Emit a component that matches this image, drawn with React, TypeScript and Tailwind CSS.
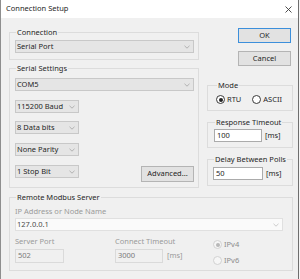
import React from "react";

const font = { fontFamily: "'Noto Sans', 'Liberation Sans', sans-serif" };

function Chevron({ color = "#a3a3a3" }: { color?: string }) {
  return (
    <svg width="6" height="4" viewBox="0 0 6 4" className="shrink-0">
      <polyline points="0.5,0.8 3,3.2 5.5,0.8" fill="none" stroke={color} strokeWidth="0.8" />
    </svg>
  );
}

function Combo({ value, className = "" }: { value: string; className?: string }) {
  return (
    <div
      className={`flex h-[13px] items-center justify-between border border-[#c8c8c8] bg-[#e5e5e5] pl-[1px] pr-[3px] text-[#262626] ${className}`}
    >
      <span className="leading-none">{value}</span>
      <Chevron />
    </div>
  );
}

function Group({
  title,
  className = "",
  children,
}: {
  title: string;
  className?: string;
  children: React.ReactNode;
}) {
  return (
    <fieldset className={`border border-[#dcdcdc] ${className}`}>
      <legend className="ml-[1px] px-[1px] leading-[10px] text-[#262626]">{title}</legend>
      {children}
    </fieldset>
  );
}

function Radio({ label, checked, disabled }: { label: string; checked?: boolean; disabled?: boolean }) {
  return (
    <div className="flex items-center gap-[2px]">
      <div
        className={`flex h-[9px] w-[9px] items-center justify-center rounded-full border ${
          disabled ? "border-[#d2d2d2] bg-[#f6f6f6]" : "border-[#3a3a3a] bg-white"
        }`}
      >
        {checked && (
          <div className={`h-[4px] w-[4px] rounded-full ${disabled ? "bg-[#b8b8b8]" : "bg-[#222222]"}`} />
        )}
      </div>
      <span className={`leading-none ${disabled ? "text-[#8d8d8d]" : "text-[#262626]"}`}>{label}</span>
    </div>
  );
}

function Button({ label, primary, className = "" }: { label: string; primary?: boolean; className?: string }) {
  return (
    <div
      className={`flex items-center justify-center border bg-[#e2e2e2] leading-none text-[#262626] ${
        primary ? "border-[#3c8fdb]" : "border-[#b4b4b4]"
      } ${className}`}
    >
      {label}
    </div>
  );
}

export default function App() {
  return (
    <div className="flex h-[279px] w-[300px] text-[7.5px]" style={font}>
      <div className="flex w-[298px] flex-col border-l border-[#8e8e8e] bg-[#f0f0f0]">
        {/* title bar */}
        <div className="flex h-[18px] shrink-0 items-center justify-between bg-white pl-[5px] pr-[6px]">
          <span className="leading-none text-[#262626]">Connection Setup</span>
          <svg width="7" height="7" viewBox="0 0 7 7">
            <path d="M0.5 0.5 L6.5 6.5 M6.5 0.5 L0.5 6.5" stroke="#3a3a3a" strokeWidth="0.9" />
          </svg>
        </div>

        <div className="flex flex-col pl-[8px]">
          <div className="flex items-start">
            {/* left column */}
            <div className="flex w-[190px] flex-col pt-[9px]">
              <Group title="Connection" className="pb-[6px] pl-[5px] pr-[4px]">
                <Combo value="Serial Port" className="mt-[3px]" />
              </Group>

              <Group title="Serial Settings" className="mt-[3px] pb-[5px] pl-[5px] pr-[4px]">
                <Combo value="COM5" className="mt-[5px]" />
                <Combo value="115200 Baud" className="mt-[9px] w-[64px]" />
                <Combo value="8 Data bits" className="mt-[8px] w-[64px]" />
                <Combo value="None Parity" className="mt-[9px] w-[64px]" />
                <div className="mt-[9px] flex items-start justify-between">
                  <Combo value="1 Stop Bit" className="w-[64px]" />
                  <Button label="Advanced..." className="mt-[1px] h-[16px] w-[53px]" />
                </div>
              </Group>
            </div>

            {/* right column */}
            <div className="ml-[8px] flex w-[86px] flex-col pt-[10px]">
              <Button label="OK" primary className="ml-auto mr-[2px] h-[15px] w-[53px]" />
              <Button label="Cancel" className="ml-auto mr-[2px] mt-[8px] h-[15px] w-[53px]" />

              <Group title="Mode" className="mt-[14px] pb-[6px] pl-[8px]">
                <div className="mt-[5px] flex items-center gap-[11px]">
                  <Radio label="RTU" checked />
                  <Radio label="ASCII" />
                </div>
              </Group>

              <Group title="Response Timeout" className="mt-[6px] pb-[5px] pl-[6px]">
                <div className="mt-[2px] flex items-center gap-[3px]">
                  <div className="flex h-[13px] w-[48px] items-center border border-[#ababab] bg-white pl-[2px] leading-none text-[#262626]">
                    100
                  </div>
                  <span className="leading-none text-[#262626]">[ms]</span>
                </div>
              </Group>

              <Group title="Delay Between Polls" className="mt-[6px] pb-[5px] pl-[5px]">
                <div className="mt-[3px] flex items-center gap-[3px]">
                  <div className="flex h-[13px] w-[50px] items-center border border-[#ababab] bg-white pl-[2px] leading-none text-[#262626]">
                    50
                  </div>
                  <span className="leading-none text-[#262626]">[ms]</span>
                </div>
              </Group>
            </div>
          </div>

          {/* remote server */}
          <Group title="Remote Modbus Server" className="mt-[4px] w-[284px] pb-[5px] pl-[5px]">
            <div className="mt-[4px] leading-[10px] text-[#9a9a9a]">IP Address or Node Name</div>
            <div className="mt-[2px] flex h-[13px] w-[268px] items-center justify-between border border-[#e0e0e0] bg-[#fafafa] pl-[1px] pr-[3px] leading-none text-[#4a4a4a]">
              <span>127.0.0.1</span>
              <Chevron color="#c0c0c0" />
            </div>
            <div className="mt-[5px] flex items-start">
              <div className="flex w-[100px] flex-col">
                <span className="leading-[10px] text-[#9a9a9a]">Server Port</span>
                <div className="mt-[3px] flex h-[14px] w-[49px] items-center border border-[#dadada] bg-[#f0f0f0] pl-[2px] leading-none text-[#7a7a7a]">
                  502
                </div>
              </div>
              <div className="flex w-[98px] flex-col">
                <span className="leading-[10px] text-[#9a9a9a]">Connect Timeout</span>
                <div className="mt-[3px] flex items-center gap-[4px]">
                  <div className="flex h-[14px] w-[48px] items-center border border-[#dadada] bg-[#f0f0f0] pl-[2px] leading-none text-[#7a7a7a]">
                    3000
                  </div>
                  <span className="leading-none text-[#9a9a9a]">[ms]</span>
                </div>
              </div>
              <div className="flex flex-col">
                <div className="mt-[4px]">
                  <Radio label="IPv4" checked disabled />
                </div>
                <div className="mt-[7px]">
                  <Radio label="IPv6" disabled />
                </div>
              </div>
            </div>
          </Group>
        </div>
      </div>
      <div className="w-[1px] bg-[#6e6e6e]" />
      <div className="w-[1px] bg-[#f4f4f4]" />
    </div>
  );
}
